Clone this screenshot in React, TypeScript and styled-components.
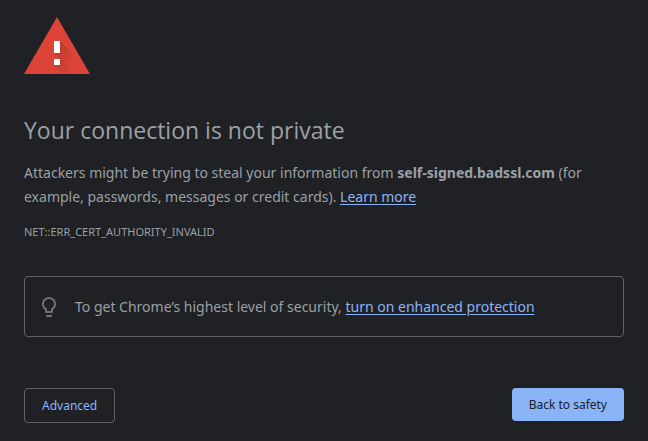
import React from "react";
import styled, { createGlobalStyle } from "styled-components";

const GlobalStyle = createGlobalStyle`
  *, *::before, *::after { box-sizing: border-box; }
  body {
    margin: 0;
    background: #202124;
    color: #9aa0a6;
    font-family: "Noto Sans", "Open Sans", sans-serif;
    font-size: 14px;
    line-height: 24px;
  }
`;

const Page = styled.main`
  max-width: 648px;
  margin: 0 auto;
  padding: 16px 24px;
`;

const Warning = styled.svg`
  display: block;
  width: 66px;
  height: 58px;
`;

const Title = styled.h1`
  margin: 40px 0 15px;
  font-family: "Open Sans", "Noto Sans", sans-serif;
  font-size: 23px;
  line-height: 32px;
  font-weight: 400;
`;

const Message = styled.p`
  margin: 0;
`;

const Link = styled.a`
  color: #8ab4f8;
  text-decoration: underline;
  text-underline-offset: 2px;
`;

const ErrorCode = styled.div`
  margin-top: 15px;
  font-size: 11px;
  line-height: 16px;
`;

const Promo = styled.section`
  display: flex;
  align-items: center;
  gap: 14px;
  margin-top: 36px;
  padding: 18px 12px 17px;
  border: 1px solid #5f6368;
  border-radius: 4px;
`;

const Bulb = styled.svg`
  flex: none;
  width: 24px;
  height: 24px;
`;

const Actions = styled.div`
  display: flex;
  flex-wrap: wrap;
  justify-content: space-between;
  align-items: flex-start;
  gap: 8px;
  margin-top: 51px;
`;

const Button = styled.button<{ $primary?: boolean }>`
  padding: 8px 17px;
  border: ${(p) => (p.$primary ? "0" : "1px solid #5f6368")};
  border-radius: 4px;
  background: ${(p) => (p.$primary ? "#8ab4f8" : "transparent")};
  color: ${(p) => (p.$primary ? "#202124" : "#8ab4f8")};
  font-family: inherit;
  font-size: 12px;
  line-height: 17px;
  cursor: pointer;
`;

export default function App() {
  return (
    <>
      <GlobalStyle />
      <Page>
        <Warning viewBox="0 0 66 58" aria-hidden="true">
          <defs>
            <linearGradient id="shade" x1="32" y1="28" x2="50" y2="46" gradientUnits="userSpaceOnUse">
              <stop offset="0" stopColor="#872b22" stopOpacity="0.4" />
              <stop offset="1" stopColor="#872b22" stopOpacity="0" />
            </linearGradient>
            <linearGradient id="shadeDot" x1="32" y1="44" x2="45" y2="57" gradientUnits="userSpaceOnUse">
              <stop offset="0" stopColor="#872b22" stopOpacity="0.4" />
              <stop offset="1" stopColor="#872b22" stopOpacity="0" />
            </linearGradient>
          </defs>
          <path d="M33 1 66 58H0Z" fill="#db4437" />
          <path d="M36 25 56 45V58H51L30 37h6Z" fill="url(#shade)" />
          <path d="M36 43 51 58H39L30 49h6Z" fill="url(#shadeDot)" />
          <path d="M30 25h6v12h-6zM30 43h6v6h-6z" fill="#fff" />
        </Warning>
        <Title>Your connection is not private</Title>
        <Message>
          Attackers might be trying to steal your information from <strong>self-signed.badssl.com</strong> (for
          example, passwords, messages or credit cards). <Link href="#learn">Learn more</Link>
        </Message>
        <ErrorCode>NET::ERR_CERT_AUTHORITY_INVALID</ErrorCode>
        <Promo>
          <Bulb viewBox="0 0 24 24" aria-hidden="true">
            <path
              d="M9 21c0 .55.45 1 1 1h4c.55 0 1-.45 1-1v-1H9v1zm3-19C8.140 2 5 5.140 5 9c0 2.380 1.190 4.470 3 5.740V17c0 .55.45 1 1 1h6c.55 0 1-.45 1-1v-2.260c1.810-1.270 3-3.360 3-5.740 0-3.860-3.140-7-7-7zm2.850 11.100l-.85.6V16h-4v-2.300l-.85-.6C7.800 12.160 7 10.630 7 9c0-2.760 2.240-5 5-5s5 2.240 5 5c0 1.630-.8 3.160-2.150 4.100z"
              fill="#6e7175"
            />
          </Bulb>
          <Message>
            To get Chrome’s highest level of security, <Link href="#protection">turn on enhanced protection</Link>
          </Message>
        </Promo>
        <Actions>
          <Button type="button">Advanced</Button>
          <Button type="button" $primary>Back to safety</Button>
        </Actions>
      </Page>
    </>
  );
}
